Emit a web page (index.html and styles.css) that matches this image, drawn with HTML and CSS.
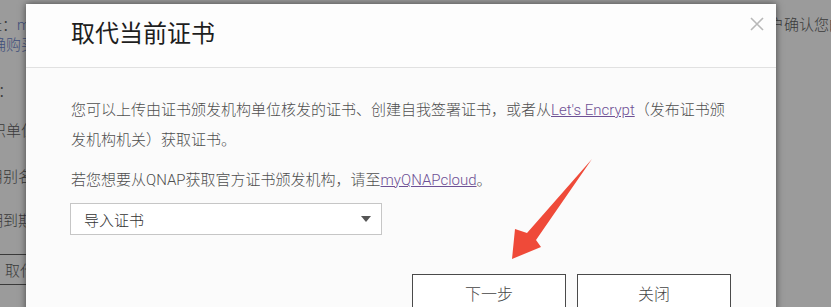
FILE: index.html
```html
<!DOCTYPE html>
<html lang="zh-CN">
<head>
<meta charset="utf-8">
<title>取代当前证书</title>
<link rel="stylesheet" href="styles.css">
</head>
<body>
<div class="page">
  <div class="bg-left">
    <div class="bl r1">址：<span class="lnk">my</span></div>
    <div class="bl r2 lnk">确购买</div>
    <div class="bl r3">称：</div>
    <div class="bl r4">织单位</div>
    <div class="bl r5">用别名</div>
    <div class="bl r6">期到期</div>
    <div class="bl-btnrow"><span class="bl-btn">取代</span></div>
  </div>
  <div class="bg-right">户确认您的</div>
</div>

<div class="modal">
  <div class="modal-head">
    <h1 class="modal-title">取代当前证书</h1>
    <span class="modal-close">
      <svg width="14" height="14" viewBox="0 0 14 14"><path d="M1 1 L13 13 M13 1 L1 13" stroke="#b8b8b8" stroke-width="1.6" fill="none"/></svg>
    </span>
  </div>
  <div class="modal-body">
    <p class="txt">您可以上传由证书颁发机构单位核发的证书、创建自我签署证书，或者从<a class="link">Let's Encrypt</a>（发布证书颁发机构机关）获取证书。</p>
    <p class="txt txt2">若您想要从QNAP获取官方证书颁发机构，请至<a class="link">myQNAPcloud</a>。</p>
    <div class="select"><span>导入证书</span><span class="caret"></span></div>
    <div class="actions">
      <button class="btn">下一步</button>
      <button class="btn">关闭</button>
    </div>
  </div>
</div>

<svg class="arrow" width="831" height="307" viewBox="0 0 831 307">
  <polygon points="592,159 536,240 541,247 512,259 515,229 527,233" fill="#ef4a39"/>
</svg>
</body>
</html>
```

FILE: styles.css
```css
html, body {
  margin: 0;
  padding: 0;
  width: 831px;
  height: 307px;
  overflow: hidden;
}
body {
  background: #9b9b9b;
  font-family: Roboto, "Noto Sans CJK SC", sans-serif;
  position: relative;
}
.page {
  display: flex;
  justify-content: space-between;
  height: 307px;
  color: #3a3a3a;
  font-size: 15px;
  font-weight: 300;
}
.bg-left {
  width: 40px;
  display: flex;
  flex-direction: column;
  overflow: hidden;
}
.bl {
  white-space: nowrap;
  height: 20px;
  line-height: 20px;
}
.lnk { color: #3f4f7c; }
.r1 { margin-top: 15px; text-indent: -13px; }
.r2 { margin-top: 0; text-indent: -9px; }
.r3 { margin-top: 26px; text-indent: -17px; }
.r4 { margin-top: 20px; text-indent: -9px; }
.r5 { margin-top: 26px; text-indent: -12px; }
.r6 { margin-top: 24px; text-indent: -12px; }
.bl-btnrow {
  margin-top: 23px;
  height: 29px;
  border-top: 1px solid #3a3a3a;
  border-bottom: 1px solid #3a3a3a;
  display: flex;
  align-items: center;
  white-space: nowrap;
  padding-left: 5px;
}
.bg-right {
  width: 62px;
  white-space: nowrap;
  overflow: hidden;
  padding-top: 15px;
  line-height: 20px;
}

.modal {
  position: absolute;
  left: 26px;
  top: 4px;
  width: 750px;
  height: 340px;
  background: #fbfbfb;
  box-shadow: 0 0 7px rgba(0, 0, 0, 0.55);
}
.modal-head {
  position: relative;
  height: 63px;
  border-bottom: 1px solid #e1e1e1;
  background: #fdfdfd;
  padding: 0 45px;
  display: flex;
  align-items: center;
}
.modal-title {
  margin: 0;
  padding-bottom: 3px;
  font-size: 24px;
  font-weight: 400;
  line-height: 32px;
  color: #1e1e1e;
}
.modal-close {
  position: absolute;
  top: 13px;
  right: 12px;
  width: 14px;
  height: 14px;
  display: block;
}
.modal-close svg { display: block; }
.modal-body {
  padding: 27px 45px 0 44px;
}
.txt {
  margin: 0;
  font-size: 15px;
  font-weight: 300;
  line-height: 30px;
  color: #4f4f4f;
  padding-left: 1px;
}
.txt2 { margin-top: 10px; }
.link {
  color: #6e5095;
  text-decoration: underline;
}
.select {
  margin-top: 8px;
  width: 312px;
  height: 32px;
  box-sizing: border-box;
  border: 1px solid #c6c6c6;
  background: #fff;
  display: flex;
  align-items: center;
  justify-content: space-between;
  padding: 0 10px 0 13px;
  font-size: 15px;
  font-weight: 300;
  color: #333;
}
.caret {
  width: 0;
  height: 0;
  border-left: 5px solid transparent;
  border-right: 5px solid transparent;
  border-top: 6px solid #555;
}
.actions {
  margin-top: 39px;
  display: flex;
  justify-content: flex-end;
  gap: 11px;
}
.btn {
  width: 154px;
  height: 38px;
  box-sizing: border-box;
  border: 1px solid #4a4a4a;
  background: #fff;
  font-family: Roboto, "Noto Sans CJK SC", sans-serif;
  font-size: 16px;
  font-weight: 300;
  color: #444;
  padding: 0;
}
.arrow {
  position: absolute;
  left: 0;
  top: 0;
  pointer-events: none;
}
```
